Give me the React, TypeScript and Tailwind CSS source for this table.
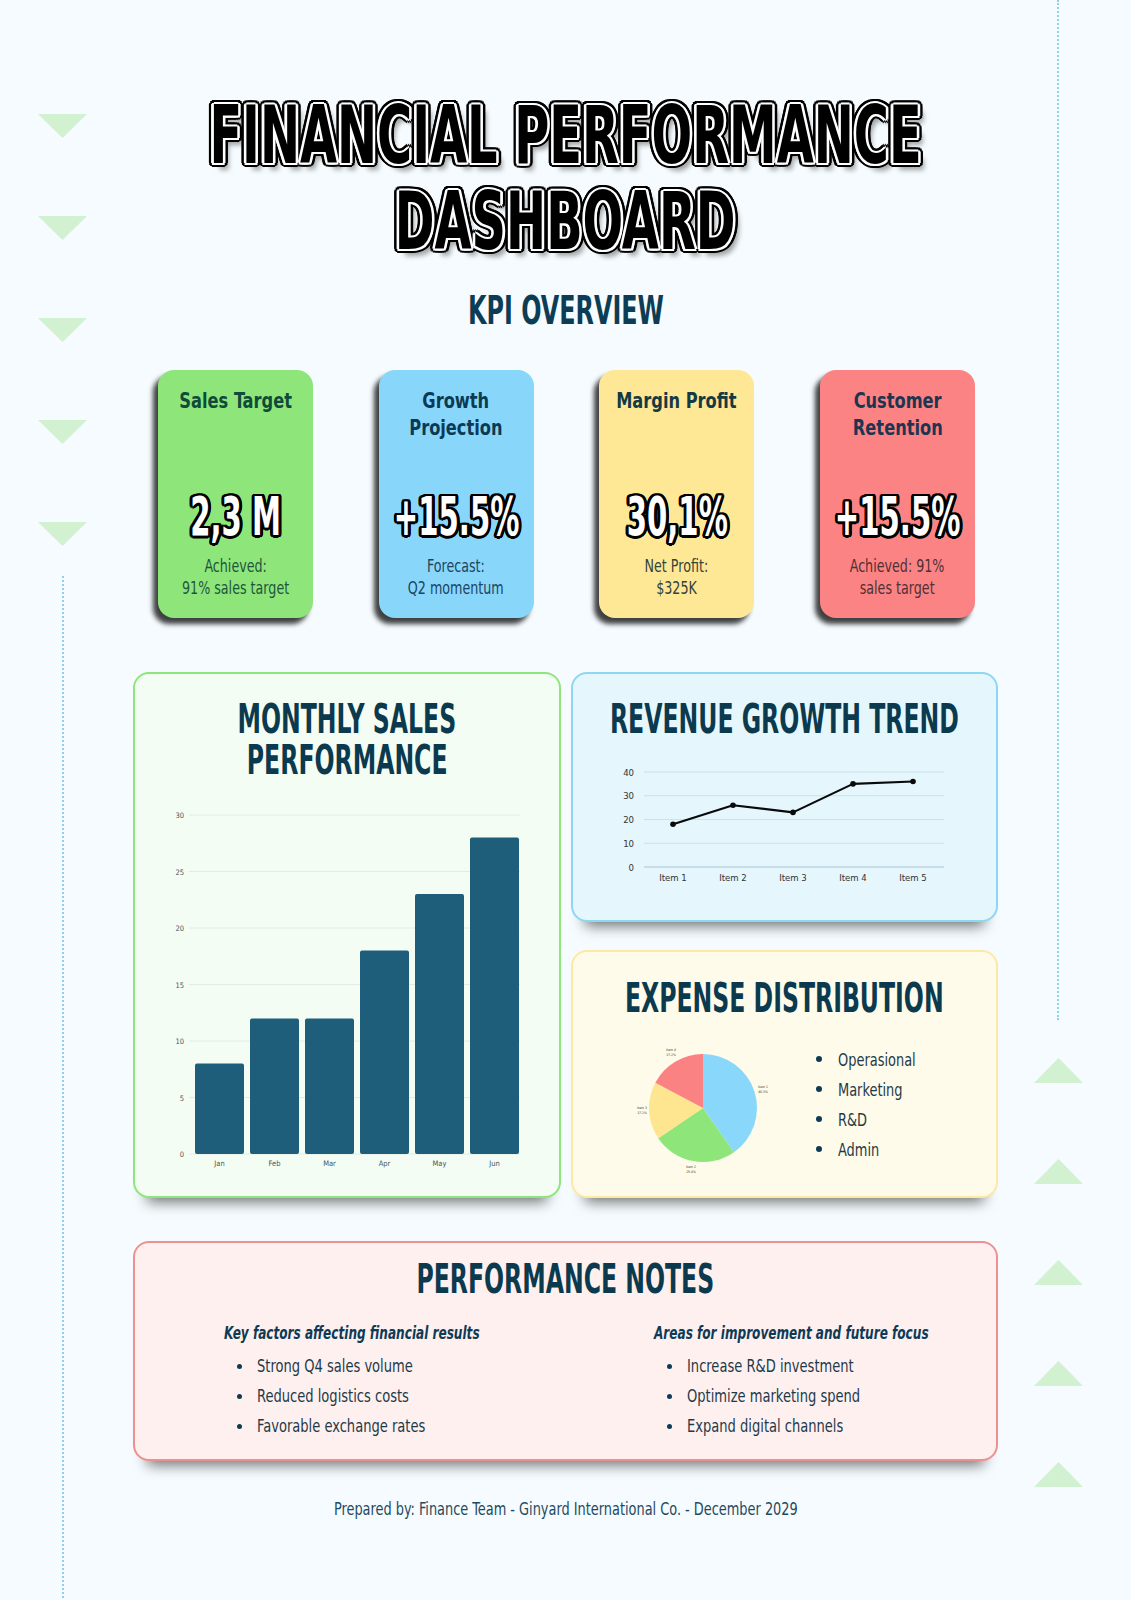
import React from "react";

const TITLE_SHADOW =
  "[text-shadow:3.8px_0_0_#fff,-3.8px_0_0_#fff,0_2px_0_#fff,0_-2px_0_#fff,2.7px_1.5px_0_#fff,-2.7px_1.5px_0_#fff,2.7px_-1.5px_0_#fff,-2.7px_-1.5px_0_#fff,7.5px_0_0_#000,-7.5px_0_0_#000,0_4px_0_#000,0_-4px_0_#000,5.4px_2.8px_0_#000,-5.4px_2.8px_0_#000,5.4px_-2.8px_0_#000,-5.4px_-2.8px_0_#000,6.9px_1.5px_0_#000,-6.9px_1.5px_0_#000,6.9px_-1.5px_0_#000,-6.9px_-1.5px_0_#000,3px_3.7px_0_#000,-3px_3.7px_0_#000,3px_-3.7px_0_#000,-3px_-3.7px_0_#000,9px_7px_6px_rgba(0,0,0,0.35)]";

const VALUE_SHADOW =
  "[text-shadow:4.8px_0_0_#000,-4.8px_0_0_#000,0_2.5px_0_#000,0_-2.5px_0_#000,3.5px_1.8px_0_#000,-3.5px_1.8px_0_#000,3.5px_-1.8px_0_#000,-3.5px_-1.8px_0_#000,4.5px_1px_0_#000,-4.5px_1px_0_#000,4.5px_-1px_0_#000,-4.5px_-1px_0_#000,1.9px_2.3px_0_#000,-1.9px_2.3px_0_#000,1.9px_-2.3px_0_#000,-1.9px_-2.3px_0_#000]";

const kpis = [
  {
    title: ["Sales Target"],
    value: "2,3 M",
    sub: ["Achieved:", "91% sales target"],
    bg: "bg-[#8ee67a]",
    titleColor: "text-[#0f4a3a]",
    subColor: "text-[#1f553c]",
  },
  {
    title: ["Growth", "Projection"],
    value: "+15.5%",
    sub: ["Forecast:", "Q2 momentum"],
    bg: "bg-[#89d6fb]",
    titleColor: "text-[#0b3a55]",
    subColor: "text-[#1b4560]",
  },
  {
    title: ["Margin Profit"],
    value: "30,1%",
    sub: ["Net Profit:", "$325K"],
    bg: "bg-[#fee896]",
    titleColor: "text-[#143a44]",
    subColor: "text-[#33433a]",
  },
  {
    title: ["Customer", "Retention"],
    value: "+15.5%",
    sub: ["Achieved: 91%", "sales target"],
    bg: "bg-[#fc8383]",
    titleColor: "text-[#1d3550]",
    subColor: "text-[#4f3036]",
  },
];

function KpiCard({ k }: { k: (typeof kpis)[number] }) {
  return (
    <div
      className={`w-[155px] h-[248px] rounded-[16px] ${k.bg} shadow-[-5px_6px_5px_rgba(0,0,0,0.75)] flex flex-col items-stretch text-center pt-[17px]`}
    >
      <div className={`h-[102px] text-[22px] leading-[27px] font-bold ${k.titleColor}`}>
        {k.title.map((t) => (
          <div key={t} className="flex justify-center">
            <span className="inline-block whitespace-nowrap scale-x-[0.82]">{t}</span>
          </div>
        ))}
      </div>
      <div className="h-[56px] flex items-center justify-center">
        <span
          className={`inline-block whitespace-nowrap scale-x-[0.6] text-[54px] leading-[56px] font-bold text-white ${VALUE_SHADOW}`}
        >
          {k.value}
        </span>
      </div>
      <div className={`mt-[10px] text-[17px] leading-[22px] ${k.subColor}`}>
        {k.sub.map((t) => (
          <div key={t} className="flex justify-center">
            <span className="inline-block whitespace-nowrap scale-x-[0.83]">{t}</span>
          </div>
        ))}
      </div>
    </div>
  );
}

function Heading({ children }: { children: React.ReactNode }) {
  return (
    <div className="flex justify-center text-[40px] leading-[44px] font-bold text-[#0b3a4f]">
      <span className="inline-block whitespace-nowrap scale-x-[0.655]">{children}</span>
    </div>
  );
}

function BarChart() {
  const data: [string, number][] = [
    ["Jan", 8],
    ["Feb", 12],
    ["Mar", 12],
    ["Apr", 18],
    ["May", 23],
    ["Jun", 28],
  ];
  const y0 = 362;
  const k = 11.3;
  return (
    <svg width="423" height="390" viewBox="0 0 423 390" className="block">
      {[0, 5, 10, 15, 20, 25, 30].map((v) => (
        <g key={v}>
          <line x1={54} x2={385} y1={y0 - v * k} y2={y0 - v * k} stroke="#e2ece4" strokeWidth={1} />
          <text x={49} y={y0 - v * k + 3} textAnchor="end" fontSize={7.5} fill="#4a5560">
            {v}
          </text>
        </g>
      ))}
      {data.map(([m, v], i) => (
        <g key={m}>
          <rect x={60 + i * 55} y={y0 - v * k} width={49} height={v * k} rx={2} fill="#1e5e7b" />
          <text x={60 + i * 55 + 24.5} y={y0 + 12} textAnchor="middle" fontSize={7.5} fill="#4a5560">
            {m}
          </text>
        </g>
      ))}
    </svg>
  );
}

function LineChart() {
  const vals = [18, 26, 23, 35, 36];
  const y0 = 115;
  const k = 2.375;
  const xs = [100, 160, 220, 280, 340];
  const pts = vals.map((v, i) => `${xs[i]},${y0 - v * k}`).join(" ");
  return (
    <svg width="423" height="135" viewBox="0 0 423 135" className="block">
      {[0, 10, 20, 30, 40].map((v) => (
        <g key={v}>
          <line
            x1={71}
            x2={371}
            y1={y0 - v * k}
            y2={y0 - v * k}
            stroke={v === 0 ? "#a9c4d2" : "#c9e2ee"}
            strokeWidth={1}
          />
          <text x={61} y={y0 - v * k + 3.5} textAnchor="end" fontSize={9.5} fill="#333">
            {v}
          </text>
        </g>
      ))}
      <polyline points={pts} fill="none" stroke="#0a0a0a" strokeWidth={2.2} strokeLinejoin="round" />
      {vals.map((v, i) => (
        <circle key={i} cx={xs[i]} cy={y0 - v * k} r={2.8} fill="#0a0a0a" />
      ))}
      {xs.map((x, i) => (
        <text key={i} x={x} y={129} textAnchor="middle" fontSize={9.5} fill="#333">
          Item {i + 1}
        </text>
      ))}
    </svg>
  );
}

function PieChart() {
  return (
    <svg width="200" height="150" viewBox="-100 -75 200 150" className="block shrink-0">
      <path d="M0,0 L0,-54 A54,54 0 0 1 30.97,44.24 Z" fill="#8ad7fc" />
      <path d="M0,0 L30.97,44.24 A54,54 0 0 1 -44.77,30.2 Z" fill="#8ee67a" />
      <path d="M0,0 L-44.77,30.2 A54,54 0 0 1 -47.68,-25.35 Z" fill="#fde68f" />
      <path d="M0,0 L-47.68,-25.35 A54,54 0 0 1 0,-54 Z" fill="#fb8282" />
      <g fontSize={3.4} fill="#333" textAnchor="middle">
        <text x={60} y={-20}>Item 1</text>
        <text x={60} y={-15.5}>40.3%</text>
        <text x={-12} y={60}>Item 2</text>
        <text x={-12} y={64.5}>25.4%</text>
        <text x={-61} y={1}>Item 3</text>
        <text x={-61} y={5.5}>17.1%</text>
        <text x={-32} y={-57}>Item 4</text>
        <text x={-32} y={-52.5}>17.2%</text>
      </g>
    </svg>
  );
}

function Bullet({ children }: { children: React.ReactNode }) {
  return (
    <li className="flex items-center h-[30px]">
      <span className="w-[5px] h-[5px] rounded-full bg-[#0d3b55] shrink-0" />
      <span className="ml-[15px] inline-block whitespace-nowrap origin-left scale-x-[0.83]">{children}</span>
    </li>
  );
}

function DownTriangle() {
  return (
    <svg width="49" height="24" viewBox="0 0 49 24" className="block">
      <polygon points="0,0 49,0 24.5,24" fill="#d2f1d0" />
    </svg>
  );
}

function UpTriangle() {
  return (
    <svg width="49" height="25" viewBox="0 0 49 25" className="block">
      <polygon points="0,25 49,25 24.5,0" fill="#d2f1d0" />
    </svg>
  );
}

export default function App() {
  return (
    <div className="relative min-h-[1600px] w-full overflow-hidden bg-[#f5fbfe] font-['Liberation_Sans_Narrow','DejaVu_Sans_Condensed','Roboto',sans-serif] text-[#0b3a4f]">
      {/* Decorations */}
      <div className="absolute left-[62px] top-[576px] h-[1030px] border-l-2 border-dotted border-[#8fd0ea]" />
      <div className="absolute left-[1057px] top-0 h-[1020px] border-l-2 border-dotted border-[#8fd0ea]" />
      <div className="absolute left-[38px] top-[114px] flex flex-col gap-[78px]">
        <DownTriangle />
        <DownTriangle />
        <DownTriangle />
        <DownTriangle />
        <DownTriangle />
      </div>
      <div className="absolute left-[1034px] top-[1058px] flex flex-col gap-[76px]">
        <UpTriangle />
        <UpTriangle />
        <UpTriangle />
        <UpTriangle />
        <UpTriangle />
      </div>

      <main className="relative mx-auto w-[865px] pt-[93px]">
        {/* Title */}
        <div className="text-[80px] leading-[86px] font-bold text-black">
          <div className="flex justify-center">
            <span className={`inline-block whitespace-nowrap scale-x-[0.665] ${TITLE_SHADOW}`}>
              FINANCIAL PERFORMANCE
            </span>
          </div>
          <div className="flex justify-center">
            <span className={`inline-block whitespace-nowrap scale-x-[0.665] ${TITLE_SHADOW}`}>
              DASHBOARD
            </span>
          </div>
        </div>

        <div className="mt-[24px] flex justify-center text-[39px] leading-[44px] font-bold text-[#0d3d55]">
          <span className="inline-block whitespace-nowrap scale-x-[0.68]">KPI OVERVIEW</span>
        </div>

        {/* KPI cards */}
        <div className="mt-[37px] flex justify-between pl-[25px] pr-[23px]">
          {kpis.map((k) => (
            <KpiCard key={k.title.join(" ")} k={k} />
          ))}
        </div>

        {/* Charts */}
        <div className="mt-[54px] grid grid-cols-2 gap-[10px]">
          <section className="h-[526px] rounded-[16px] border-2 border-[#8ee67a] bg-[#f3fdf3] pt-[25px] shadow-[0_18px_14px_-14px_rgba(0,0,0,0.55)]">
            <div className="text-[40px] leading-[41px] font-bold text-[#0b3a4f]">
              <div className="flex justify-center">
                <span className="inline-block whitespace-nowrap scale-x-[0.655]">MONTHLY SALES</span>
              </div>
              <div className="flex justify-center">
                <span className="inline-block whitespace-nowrap scale-x-[0.655]">PERFORMANCE</span>
              </div>
            </div>
            <div className="mt-[11px]">
              <BarChart />
            </div>
          </section>

          <div className="flex flex-col gap-[28px]">
            <section className="h-[250px] rounded-[16px] border-2 border-[#8fd6f2] bg-[#e6f6fd] pt-[23px] shadow-[0_18px_14px_-14px_rgba(0,0,0,0.55)]">
              <Heading>REVENUE GROWTH TREND</Heading>
              <div className="mt-[11px]">
                <LineChart />
              </div>
            </section>

            <section className="h-[248px] rounded-[16px] border-2 border-[#fce9a3] bg-[#fffbea] pt-[24px] shadow-[0_18px_14px_-14px_rgba(0,0,0,0.55)]">
              <Heading>EXPENSE DISTRIBUTION</Heading>
              <div className="mt-[13px] flex items-start">
                <div className="ml-[30px]">
                  <PieChart />
                </div>
                <ul className="ml-[13px] mt-[11px] text-[18px] text-[#1d3a48]">
                  {["Operasional", "Marketing", "R&D", "Admin"].map((t) => (
                    <li key={t} className="flex items-center h-[30px]">
                      <span className="w-[6px] h-[6px] rounded-full bg-[#0d3b55] shrink-0" />
                      <span className="ml-[16px] inline-block whitespace-nowrap origin-left scale-x-[0.8]">{t}</span>
                    </li>
                  ))}
                </ul>
              </div>
            </section>
          </div>
        </div>

        {/* Notes */}
        <section className="mt-[43px] h-[220px] rounded-[16px] border-2 border-[#ee9090] bg-[#fff0f0] pt-[14px] shadow-[0_18px_14px_-14px_rgba(0,0,0,0.55)]">
          <Heading>PERFORMANCE NOTES</Heading>
          <div className="mt-[20px] grid grid-cols-[430px_1fr] pl-[89px]">
            <div>
              <div className="text-[17px] leading-[24px] font-bold italic text-[#0d3b55]">
                <span className="inline-block whitespace-nowrap origin-left scale-x-[0.79]">
                  Key factors affecting financial results
                </span>
              </div>
              <ul className="mt-[6px] pl-[13px] text-[17.5px] text-[#1d3a48]">
                <Bullet>Strong Q4 sales volume</Bullet>
                <Bullet>Reduced logistics costs</Bullet>
                <Bullet>Favorable exchange rates</Bullet>
              </ul>
            </div>
            <div>
              <div className="text-[17px] leading-[24px] font-bold italic text-[#0d3b55]">
                <span className="inline-block whitespace-nowrap origin-left scale-x-[0.79]">
                  Areas for improvement and future focus
                </span>
              </div>
              <ul className="mt-[6px] pl-[13px] text-[17.5px] text-[#1d3a48]">
                <Bullet>Increase R&amp;D investment</Bullet>
                <Bullet>Optimize marketing spend</Bullet>
                <Bullet>Expand digital channels</Bullet>
              </ul>
            </div>
          </div>
        </section>

        <footer className="mt-[36px] flex justify-center text-[17.5px] leading-[24px] text-[#1f4a5e]">
          <span className="inline-block whitespace-nowrap scale-x-[0.82]">
            Prepared by: Finance Team - Ginyard International Co. - December 2029
          </span>
        </footer>
      </main>
    </div>
  );
}
